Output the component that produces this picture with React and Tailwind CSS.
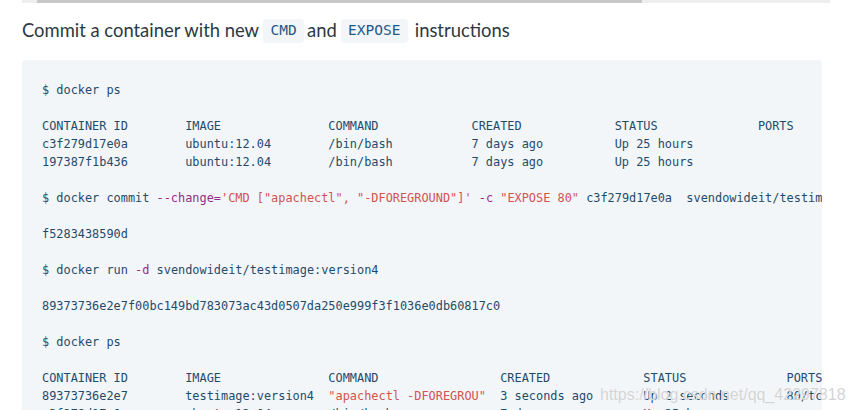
const pad = (s, n) => s.padEnd(n, " ");

const R = ({ children }) => <span className="text-[#d2524f]">{children}</span>;
const P = ({ children }) => <span className="text-[#952a8c]">{children}</span>;

function Table1() {
  const cols = [20, 20, 20, 20, 20, 20];
  const rows = [
    ["CONTAINER ID", "IMAGE", "COMMAND", "CREATED", "STATUS", "PORTS", "NAMES"],
    ["c3f279d17e0a", "ubuntu:12.04", "/bin/bash", "7 days ago", "Up 25 hours", "", "desperate_dubinsky"],
    ["197387f1b436", "ubuntu:12.04", "/bin/bash", "7 days ago", "Up 25 hours", "", "focused_hamilton"],
  ];
  return rows.map((r, i) => (
    <div key={i} className="h-[18px]">
      {r.map((c, j) => (j < cols.length ? pad(c, cols[j]) : c)).join("")}
    </div>
  ));
}

function Table2() {
  const head = ["CONTAINER ID", "IMAGE", "COMMAND", "CREATED", "STATUS", "PORTS", "NAMES"];
  const cols = [20, 20, 24, 20, 20, 20];
  return (
    <>
      <div className="h-[18px]">
        {head.map((c, j) => (j < cols.length ? pad(c, cols[j]) : c)).join("")}
      </div>
      <div className="h-[18px]">
        {pad("89373736e2e7", 20) + pad("testimage:version4", 20)}
        <R>"apachectl -DFOREGROU"</R>
        {"  " + pad("3 seconds ago", 20) + pad("Up 2 seconds", 20) + pad("80/tcp", 20) + "distracted_fermat"}
      </div>
      <div className="h-[18px]">
        {pad("c3f279d17e0a", 20) + pad("ubuntu:12.04", 20) + pad("/bin/bash", 24) + pad("7 days ago", 20) + pad("Up 25 hours", 40) + "desperate_dubinsky"}
      </div>
    </>
  );
}

const Blank = () => <div className="h-[18px]" />;

export default function App() {
  return (
    <div className="relative w-[852px] h-[410px] overflow-hidden bg-white">
      <div className="mx-[22px]">
        <div className="h-[3px] bg-[#eeeeee] pl-[15px]">
          <div className="h-full w-[605px] bg-[#c8c8c8]" />
        </div>

        <h3 className="mt-[16px] h-[24px] flex items-center text-[18.4px] text-[#2b3942] font-['Lato',sans-serif]">
          <span>Commit a container with new</span>
          <code className="ml-[4px] mr-[3px] flex items-center justify-center w-[41px] h-[24px] rounded-[3px] bg-[#f3f6f9] text-[#1f5a86] text-[14.5px] font-['DejaVu_Sans_Mono',monospace]">
            CMD
          </code>
          <span>and</span>
          <code className="ml-[4px] mr-[7px] flex items-center justify-center w-[67px] h-[24px] rounded-[3px] bg-[#f3f6f9] text-[#1f5a86] text-[14.5px] font-['DejaVu_Sans_Mono',monospace]">
            EXPOSE
          </code>
          <span>instructions</span>
        </h3>

        <pre className="mt-[17px] w-[800px] h-[400px] overflow-hidden rounded-[4px] bg-[#f3f6f9] pl-[20px] pt-[21px] text-[11.9px] leading-[18px] text-[#1f4b6b] font-['DejaVu_Sans_Mono',monospace]">
          <div className="h-[18px]">$ docker ps</div>
          <Blank />
          <Table1 />
          <Blank />
          <div className="h-[18px]">
            $ docker commit <P>--change=</P>
            <R>'CMD ["apachectl", "-DFOREGROUND"]'</R> <P>-c</P> <R>"EXPOSE 80"</R>
            {" c3f279d17e0a  svendowideit/testimage:version4"}
          </div>
          <Blank />
          <div className="h-[18px]">f5283438590d</div>
          <Blank />
          <div className="h-[18px]">
            $ docker run <P>-d</P> svendowideit/testimage:version4
          </div>
          <Blank />
          <div className="h-[18px]">89373736e2e7f00bc149bd783073ac43d0507da250e999f3f1036e0db60817c0</div>
          <Blank />
          <div className="h-[18px]">$ docker ps</div>
          <Blank />
          <Table2 />
        </pre>
      </div>

      <div className="absolute left-[600px] top-[384px] text-[16px] leading-[22px] text-[#d4d4d4] font-['Liberation_Sans',sans-serif] [text-shadow:0_0_1px_#ffffff]">
        https://blog.csdn.net/qq_42297818
      </div>
    </div>
  );
}
